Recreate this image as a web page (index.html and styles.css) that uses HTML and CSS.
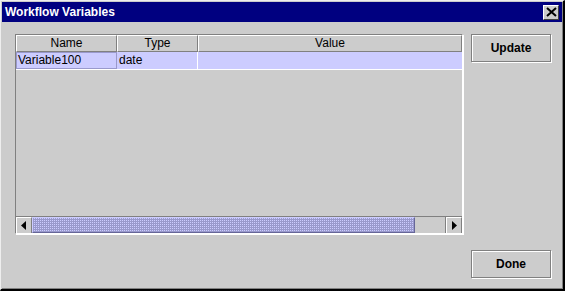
FILE: index.html
```html
<!DOCTYPE html>
<html lang="en">
<head>
    <meta charset="utf-8">
    <title>Workflow Variables</title>
    <link rel="stylesheet" href="styles.css">
</head>
<body>
    <div class="finestra">
        <div class="titolo">
            <span>Workflow Variables</span>
            <div class="chiudi">
                <svg width="11" height="10" viewBox="0 0 11 10">
                    <path d="M1 1 L10 9 M10 1 L1 9" stroke="#000" stroke-width="2"/>
                </svg>
            </div>
        </div>
        <div class="contenuto">
            <div class="tabella">
                <div class="intestazione">
                    <div class="col nome">Name</div>
                    <div class="col tipo">Type</div>
                    <div class="col valore">Value</div>
                </div>
                <div class="riga">
                    <div class="cella nome attiva">Variable100</div>
                    <div class="cella tipo">date</div>
                    <div class="cella valore"></div>
                </div>
                <div class="vuoto"></div>
                <div class="scorrimento">
                    <div class="freccia">
                        <svg width="6" height="9" viewBox="0 0 6 9"><path d="M5 0 L5 9 L0 4.5 Z" fill="#000"/></svg>
                    </div>
                    <div class="cursore"></div>
                    <div class="pista"></div>
                    <div class="freccia">
                        <svg width="6" height="9" viewBox="0 0 6 9"><path d="M1 0 L1 9 L6 4.5 Z" fill="#000"/></svg>
                    </div>
                </div>
            </div>
            <div class="pulsanti">
                <button>Update</button>
                <button>Done</button>
            </div>
        </div>
    </div>
</body>
</html>
```

FILE: styles.css
```css
body {
    margin: 0;
    font-family: "Liberation Sans", Arial, sans-serif;
    font-size: 12px;
}
.finestra {
    width: 565px;
    height: 291px;
    box-sizing: border-box;
    background: #cccccc;
    border-top: 1px solid #eeeeee;
    border-left: 1px solid #eeeeee;
    border-right: 2px solid #000000;
    border-bottom: 2px solid #000000;
    box-shadow: inset 1px 1px 0 #cccccc, inset -1px -1px 0 #808080;
    padding: 1px;
    display: flex;
    flex-direction: column;
}
.titolo {
    height: 20px;
    background: #000080;
    color: #ffffff;
    font-weight: bold;
    font-size: 12px;
    display: flex;
    align-items: center;
    justify-content: space-between;
    padding: 0 3px 0 3px;
}
.chiudi {
    width: 14px;
    height: 13px;
    background: #cccccc;
    border-top: 1px solid #ffffff;
    border-left: 1px solid #ffffff;
    border-right: 1px solid #404040;
    border-bottom: 1px solid #404040;
    display: flex;
    align-items: center;
    justify-content: center;
}
.contenuto {
    flex: 1;
    display: flex;
    padding: 12px 11px 10px 13px;
    gap: 8px;
}
.tabella {
    width: 449px;
    height: 200px;
    box-sizing: border-box;
    border-top: 1px solid #808080;
    border-left: 1px solid #808080;
    border-right: 1px solid #ffffff;
    border-bottom: 1px solid #ffffff;
    box-shadow: 1px 1px 0 #ffffff, -1px -1px 0 #cccccc;
    display: flex;
    flex-direction: column;
}
.intestazione {
    display: flex;
    height: 17px;
}
.col {
    box-sizing: border-box;
    text-align: center;
    line-height: 15px;
    border-top: 1px solid #ffffff;
    border-left: 1px solid #ffffff;
    border-right: 1px solid #808080;
    border-bottom: 1px solid #808080;
    background: #cccccc;
    color: #000;
}
.nome { width: 101px; }
.tipo { width: 81px; }
.valore { flex: 1; }
.riga {
    display: flex;
    height: 17px;
    background: #ccccff;
    border-bottom: 1px solid #ffffff;
}
.cella {
    box-sizing: border-box;
    line-height: 16px;
    padding-left: 2px;
    border-right: 1px solid #ffffff;
}
.cella.valore {
    border-right: none;
}
.attiva {
    border: 1px solid #9999cc;
    padding-left: 1px;
    line-height: 14px;
}
.vuoto {
    flex: 1;
}
.scorrimento {
    display: flex;
    height: 16px;
    border-top: 1px solid #808080;
}
.freccia {
    width: 16px;
    box-sizing: border-box;
    background: #cccccc;
    border-top: 1px solid #ffffff;
    border-left: 1px solid #ffffff;
    border-right: 1px solid #808080;
    display: flex;
    align-items: center;
    justify-content: center;
}
.cursore {
    width: 383px;
    box-sizing: border-box;
    border: 1px solid #666699;
    border-top-color: #ccccff;
    border-left-color: #ccccff;
    background: repeating-conic-gradient(#ccccff 0 25%, #9999cc 0 50%, #9999cc 0 75%, #9999cc 0 100%) 0 0 / 2px 2px;
}
.pista {
    flex: 1;
    background: #cccccc;
    border-right: 1px solid #808080;
}
.pulsanti {
    display: flex;
    flex-direction: column;
    justify-content: space-between;
}
button {
    width: 80px;
    height: 28px;
    font-family: "Liberation Sans", Arial, sans-serif;
    font-size: 12px;
    font-weight: bold;
    color: #000;
    background: #cccccc;
    border: 1px solid #808080;
    box-shadow: inset 1px 1px 0 #ffffff, 1px 1px 0 #ffffff;
    padding: 0;
}
```
